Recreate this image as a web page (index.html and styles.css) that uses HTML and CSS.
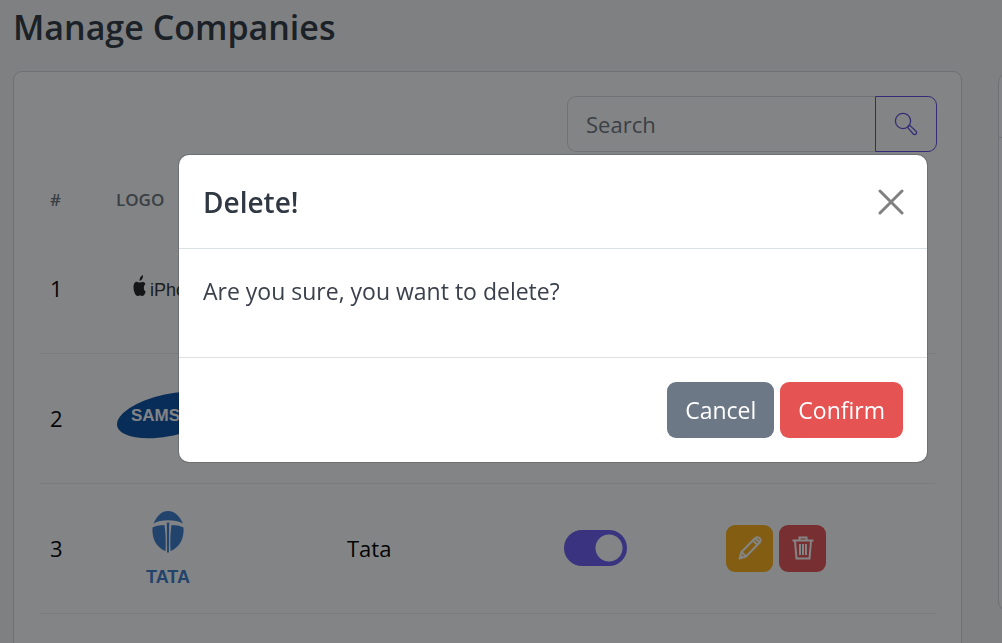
FILE: index.html
```
<!DOCTYPE html>
<html lang="en">
<head>
    <meta charset="UTF-8">
    <meta name="viewport" content="width=device-width, initial-scale=1.0">
    <title>Manage Companies</title>
    <link rel="stylesheet" href="styles.css">
</head>
<body>
    <main class="page">
        <h1>Manage Companies</h1>
        <div class="columns">
            <section class="card">
                <form class="search">
                    <input type="text" placeholder="Search" aria-label="Search">
                    <button type="button" aria-label="Search">
                        <svg width="24" height="24" viewBox="0 0 24 24" fill="none" stroke="currentColor" stroke-width="1.3">
                            <circle cx="9" cy="9" r="7.6"/>
                            <path d="M14 14.2c.8-.9 1.600-1 2.400-.3l5.600 5.400a1.900 1.900 0 0 1-2.700 2.700l-4.900-5.600c-.7-.8-.9-1.500-.4-2.200z"/>
                        </svg>
                    </button>
                </form>
                <table>
                    <thead>
                        <tr>
                            <th class="col-id">#</th>
                            <th class="col-logo">Logo</th>
                            <th class="col-name"></th>
                            <th class="col-status"></th>
                            <th></th>
                        </tr>
                    </thead>
                    <tbody>
                        <tr>
                            <td>1</td>
                            <td>
                                <svg class="logo" viewBox="0 0 104 80" role="img" aria-label="iPhone">
                                    <path fill="#222" d="M24 34.500c-1.500 0-2-.8-3.200-.8-2.300 0-3.300 2.500-3.300 5.500 0 4.500 2.200 8.800 4 8.800 1 0 1.500-.6 2.500-.6s1.500 .6 2.500 .6c1.600 0 2.600-2.500 3.200-4.500-2.400-1.500-2.500-6-.2-7.600-1.100-2.200-3.300-2.500-5.500-1.400zM23.500 33c0-3 1-5 3.500-6 .2 3-1.200 5.500-3.500 6z"/>
                                    <text class="iphone-text" x="34" y="48">iPhone</text>
                                </svg>
                            </td>
                            <td></td>
                            <td></td>
                            <td></td>
                        </tr>
                        <tr>
                            <td>2</td>
                            <td>
                                <svg class="logo" viewBox="0 0 104 80" role="img" aria-label="Samsung">
                                    <ellipse cx="53" cy="37" rx="53" ry="21" fill="#0850a4" transform="rotate(-12 53 37)"/>
                                    <text class="samsung-text" x="15" y="43">SAMSUNG</text>
                                </svg>
                            </td>
                            <td></td>
                            <td></td>
                            <td></td>
                        </tr>
                        <tr>
                            <td>3</td>
                            <td>
                                <svg class="logo" viewBox="0 0 104 80" role="img" aria-label="Tata">
                                    <g fill="#3b7ccd">
                                        <path d="M37.500 15.500C41 7.500 46 3 52 3s11.500 4.500 15 12.500c-4-2.200-9-3.200-15-3.200s-10.500 1-14.500 3.200z"/>
                                        <path d="M36.500 19.500c4-2 8-2.600 12-2.600 1.300 9 1.500 18 1 26-8-2.500-14-11.500-13-23.400z"/>
                                        <path d="M67.500 19.500c-4-2-8-2.600-12-2.600-1.300 9-1.500 18-1 26 8-2.500 14-11.500 13-23.400z"/>
                                        <path d="M50.800 14.500h2.400l-.3 30h-1.800z"/>
                                    </g>
                                    <text class="tata-text" x="52" y="75" text-anchor="middle">TATA</text>
                                </svg>
                            </td>
                            <td>Tata</td>
                            <td><input class="switch" type="checkbox" checked aria-label="Tata active"></td>
                            <td>
                                <div class="actions">
                                    <button type="button" class="edit" aria-label="Edit">
                                        <svg width="24" height="24" viewBox="0 0 24 24" fill="none" stroke="currentColor" stroke-width="2" stroke-linejoin="round">
                                            <path d="M1.500 22.500l2-6.500L17 2.300a2.700 2.700 0 0 1 4.700 4.200L8 20.500z"/>
                                            <path d="M3.500 16l4.500 4.500M15 4.500l4.500 4.500M17.500 2.500l4 4M1.500 22.500l3-2.500"/>
                                        </svg>
                                    </button>
                                    <button type="button" class="delete" aria-label="Delete">
                                        <svg width="24" height="24" viewBox="0 0 24 24" fill="none" stroke="currentColor" stroke-width="2">
                                            <path d="M1.500 4.500h21M8.500 4V1.500h7V4M4 5l1.500 17.500h13L20 5"/>
                                            <path d="M9 8v11M12 8v11M15 8v11"/>
                                        </svg>
                                    </button>
                                </div>
                            </td>
                        </tr>
                    </tbody>
                </table>
            </section>
            <aside class="side-card">
                <div class="side-header"></div>
            </aside>
        </div>
    </main>

    <div class="backdrop">
        <div class="modal" role="dialog" aria-modal="true" aria-labelledby="modal-title">
            <div class="modal-header">
                <h2 id="modal-title">Delete!</h2>
                <button type="button" class="close" aria-label="Close">
                    <svg width="26" height="26" viewBox="0 0 26 26" fill="none" stroke="currentColor" stroke-width="3" stroke-linecap="round">
                        <path d="M2 2l22 22M24 2L2 24"/>
                    </svg>
                </button>
            </div>
            <div class="modal-body">Are you sure, you want to delete?</div>
            <div class="modal-footer">
                <button type="button" class="btn btn-cancel">Cancel</button>
                <button type="button" class="btn btn-confirm">Confirm</button>
            </div>
        </div>
    </div>
</body>
</html>
```
FILE: styles.css
```
* {
    box-sizing: border-box;
}
body {
    margin: 0;
    height: 100vh;
    overflow: hidden;
    background-color: #f5f7f8;
    color: #000;
    font-family: "Open Sans", "Noto Sans", sans-serif;
    font-size: 22px;
    line-height: 36px;
}
button, input {
    font: inherit;
}
.page {
    height: 100vh;
    padding-left: 13px;
    overflow: hidden;
}
h1 {
    margin: 0;
    padding: 3px 0 20px;
    color: #2f3843;
    font-size: 34px;
    font-weight: 600;
    line-height: 48px;
}
.columns {
    display: grid;
    grid-template-columns: minmax(0, 1fr) 4px;
    gap: 36px;
    align-items: start;
}
.card, .side-card {
    background-color: #fff;
    border: 1px solid #d3d7dc;
    border-radius: 9px;
}
.card {
    height: 100vh;
    padding: 24px;
}
.side-card {
    width: 400px;
    height: 542px;
    border-radius: 12px;
}
.side-header {
    height: 66px;
    border-bottom: 1px solid #d3d7dc;
}
.search {
    display: flex;
    width: 370px;
    margin-left: auto;
}
.search input {
    flex: 1;
    min-width: 0;
    height: 56px;
    padding: 0 18px;
    border: 1px solid #d9dbde;
    border-right: none;
    border-radius: 9px 0 0 9px;
    background: #fff;
}
.search input::placeholder {
    color: #6f7780;
    opacity: 1;
}
.search button {
    display: flex;
    align-items: center;
    justify-content: center;
    width: 62px;
    padding: 0;
    border: 1px solid #5f50e0;
    border-radius: 0 9px 9px 0;
    background: #fff;
    color: #5f50e0;
}
table {
    width: calc(100% - 4px);
    margin: 24px 2px 0;
    border-collapse: collapse;
    table-layout: fixed;
}
th, td {
    padding: 0 10px;
    text-align: left;
}
th {
    height: 47px;
    color: #6b747d;
    font-size: 17px;
    font-weight: 600;
    text-transform: uppercase;
}
td {
    height: 130px;
    border-bottom: 1px solid #edeff1;
}
.col-id {
    width: 66px;
}
.col-logo {
    width: 231px;
}
.col-name {
    width: 217px;
}
.col-status {
    width: 162px;
}
.logo {
    display: block;
    width: 104px;
    height: 80px;
}
.iphone-text, .samsung-text, .tata-text {
    font-family: "Liberation Sans Narrow", "Liberation Sans", sans-serif;
    font-weight: bold;
}
.iphone-text {
    fill: #333;
    font-size: 18px;
    font-weight: normal;
}
.samsung-text {
    fill: #fff;
    font-size: 17px;
}
.tata-text {
    fill: #3b7ccd;
    font-size: 18px;
}
.switch {
    display: block;
    width: 63px;
    height: 36px;
    margin: 0;
    appearance: none;
    border-radius: 18px;
    background: radial-gradient(circle at 45px 18px, #fff 13px, #6a5cf5 14px);
}
.actions {
    display: flex;
    gap: 6px;
}
.actions button {
    display: flex;
    align-items: center;
    justify-content: center;
    width: 47px;
    height: 47px;
    padding: 0;
    border: none;
    border-radius: 9px;
    color: #fff;
}
.actions .edit {
    background-color: #ffb118;
}
.actions .delete {
    background-color: #e85457;
}
.backdrop {
    position: fixed;
    inset: 0;
    padding: 155px 75px 0 179px;
    background-color: rgba(8, 10, 12, 0.5);
}
.modal {
    border-radius: 10px;
    background-color: #fff;
    box-shadow: 0 0 0 1px rgba(0, 0, 0, 0.15);
    color: #3a404c;
    font-size: 23px;
}
.modal-header {
    display: flex;
    align-items: center;
    justify-content: space-between;
    height: 94px;
    padding: 0 23px 0 24px;
    border-bottom: 1px solid #dbe2e6;
}
.modal-header h2 {
    margin: 0;
    color: #2f3843;
    font-size: 28px;
    font-weight: 600;
}
.close {
    display: flex;
    padding: 0;
    border: none;
    background: none;
    color: #808080;
}
.modal-body {
    padding: 24px 24px 48px;
}
.modal-footer {
    display: flex;
    justify-content: flex-end;
    gap: 6px;
    padding: 24px;
    border-top: 1px solid #dddfe0;
}
.btn {
    height: 56px;
    padding: 0 18px;
    border: none;
    border-radius: 9px;
    color: #fff;
}
.btn-cancel {
    background-color: #6c7886;
}
.btn-confirm {
    background-color: #e65353;
}
```
